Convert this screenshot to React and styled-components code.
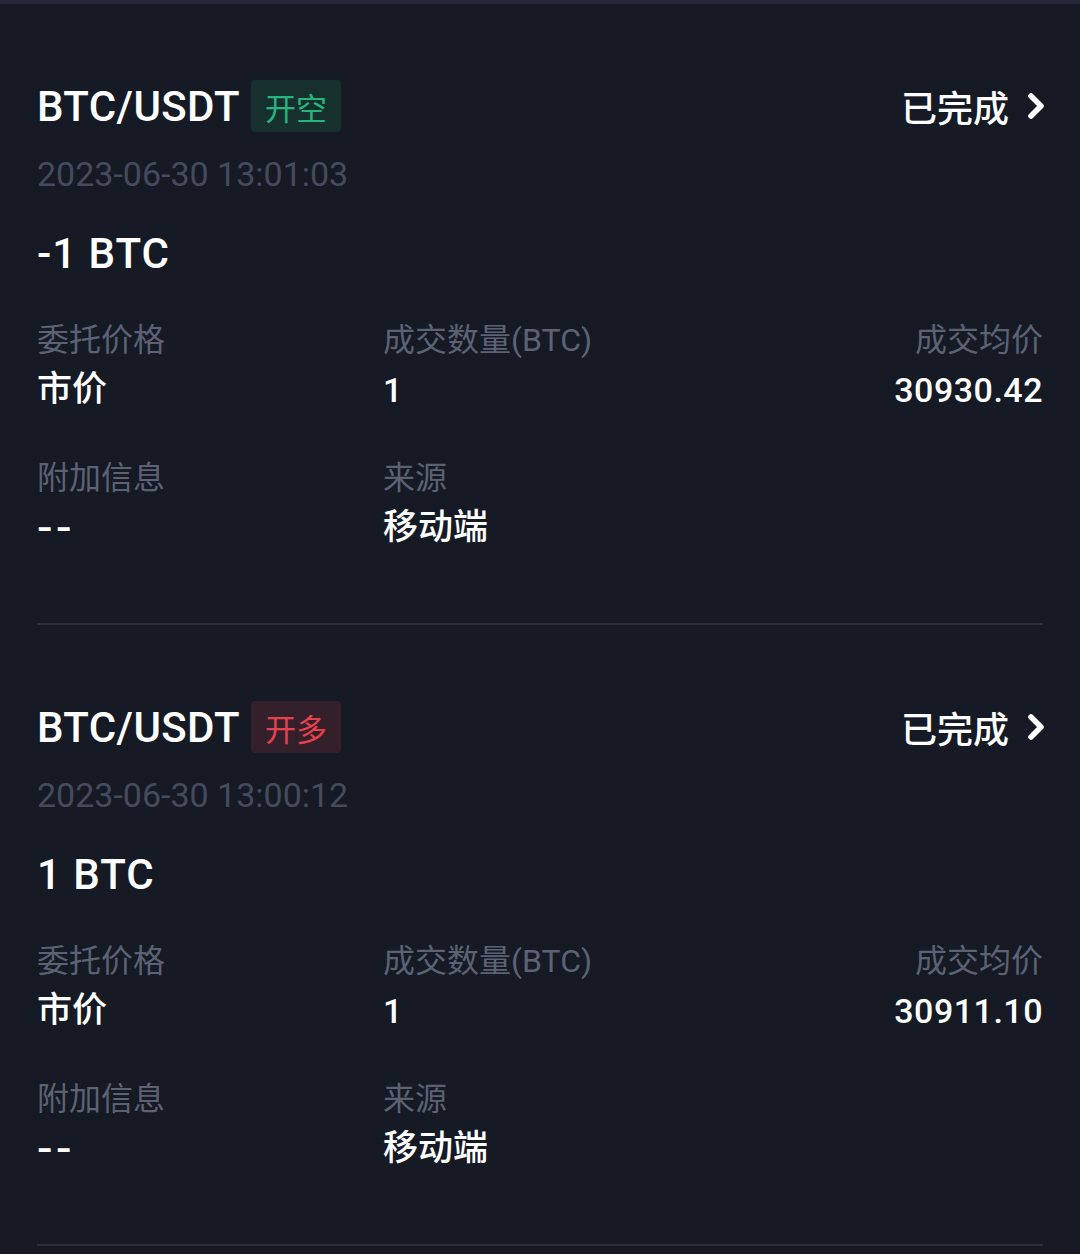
import React from "react";
import styled, { createGlobalStyle } from "styled-components";

const GlobalStyle = createGlobalStyle`
    body {
        margin: 0;
        background: #151a25;
        font-family: Roboto, "Noto Sans CJK SC", sans-serif;
    }
`;

const orders = [
    {
        pair: "BTC/USDT",
        side: "short",
        sideLabel: "开空",
        time: "2023-06-30 13:01:03",
        amount: "-1 BTC",
        qty: "1",
        avg: "30930.42",
    },
    {
        pair: "BTC/USDT",
        side: "long",
        sideLabel: "开多",
        time: "2023-06-30 13:00:12",
        amount: "1 BTC",
        qty: "1",
        avg: "30911.10",
    },
];

const Chevron = () => (
    <svg width="22" height="30" viewBox="0 0 22 30">
        <polyline
            points="6,5 16,15 6,25"
            fill="none"
            stroke="#fff"
            strokeWidth="5.5"
            strokeLinecap="round"
            strokeLinejoin="round"
        />
    </svg>
);

const OrderCard = ({ order }) => (
    <Card>
        <Header>
            <Pair>
                {order.pair}
                <SideTag side={order.side}>{order.sideLabel}</SideTag>
            </Pair>
            <Status>
                已完成
                <Chevron />
            </Status>
        </Header>
        <Time>{order.time}</Time>
        <Amount>{order.amount}</Amount>
        <InfoGrid>
            <Field>
                <Label>委托价格</Label>
                <Value>市价</Value>
            </Field>
            <Field>
                <Label>成交数量(BTC)</Label>
                <Value numeric>{order.qty}</Value>
            </Field>
            <Field align="right">
                <Label>成交均价</Label>
                <Value numeric>{order.avg}</Value>
            </Field>
            <Field>
                <Label>附加信息</Label>
                <Dashes>--</Dashes>
            </Field>
            <Field>
                <Label>来源</Label>
                <Value>移动端</Value>
            </Field>
        </InfoGrid>
    </Card>
);

const App = () => (
    <>
        <GlobalStyle />
        <Page>
            <TopStrip />
            {orders.map((order) => (
                <OrderCard key={order.time} order={order} />
            ))}
        </Page>
    </>
);

export default App;

const Page = styled.div`
    width: 1080px;
    min-height: 1254px;
    background: #151a25;
    overflow: hidden;
`;

const TopStrip = styled.div`
    height: 4px;
    background: #23283a;
`;

const Card = styled.div`
    margin: 0 37px;
    padding: 76px 0 73px;
    border-bottom: 2px solid #2a2f3c;
`;

const Header = styled.div`
    display: flex;
    align-items: center;
    justify-content: space-between;
    height: 52px;
`;

const Pair = styled.div`
    display: flex;
    align-items: center;
    gap: 11px;
    font-size: 42px;
    font-weight: 500;
    color: #fff;
    letter-spacing: 0.4px;
`;

const SideTag = styled.span`
    display: inline-flex;
    align-items: center;
    justify-content: center;
    width: 90px;
    height: 52px;
    border-radius: 4px;
    font-family: "Noto Sans CJK SC", sans-serif;
    font-size: 31px;
    font-weight: 400;
    letter-spacing: 0;
    background: ${(props) => (props.side === "long" ? "#33202a" : "#16302d")};
    color: ${(props) => (props.side === "long" ? "#e8414e" : "#26b57f")};
`;

const Status = styled.div`
    display: flex;
    align-items: center;
    gap: 16px;
    font-family: "Noto Sans CJK SC", sans-serif;
    font-size: 36px;
    font-weight: 500;
    color: #fff;

    svg {
        margin-right: -4px;
    }
`;

const Time = styled.div`
    margin-top: 22px;
    font-size: 34px;
    line-height: 40px;
    color: #454b5d;
`;

const Amount = styled.div`
    margin-top: 35px;
    font-size: 42px;
    line-height: 50px;
    font-weight: 500;
    color: #fff;
    letter-spacing: 1px;
`;

const InfoGrid = styled.div`
    display: grid;
    grid-template-columns: 346px 1fr 1fr;
    row-gap: 46px;
    margin-top: 41px;
`;

const Field = styled.div`
    display: flex;
    flex-direction: column;
    gap: 8px;
    align-items: ${(props) => (props.align === "right" ? "flex-end" : "flex-start")};
`;

const Label = styled.div`
    font-size: 32px;
    line-height: 40px;
    color: #5c6274;
`;

const Value = styled.div`
    font-size: ${(props) => (props.numeric ? "34px" : "35px")};
    line-height: 44px;
    font-weight: 500;
    color: #fff;
    letter-spacing: ${(props) => (props.numeric ? "0.5px" : "0")};
`;

const Dashes = styled.div`
    font-size: 38px;
    line-height: 44px;
    font-weight: 500;
    color: #fff;
    letter-spacing: 3px;
    transform: scaleX(1.2);
    transform-origin: left center;
`;
